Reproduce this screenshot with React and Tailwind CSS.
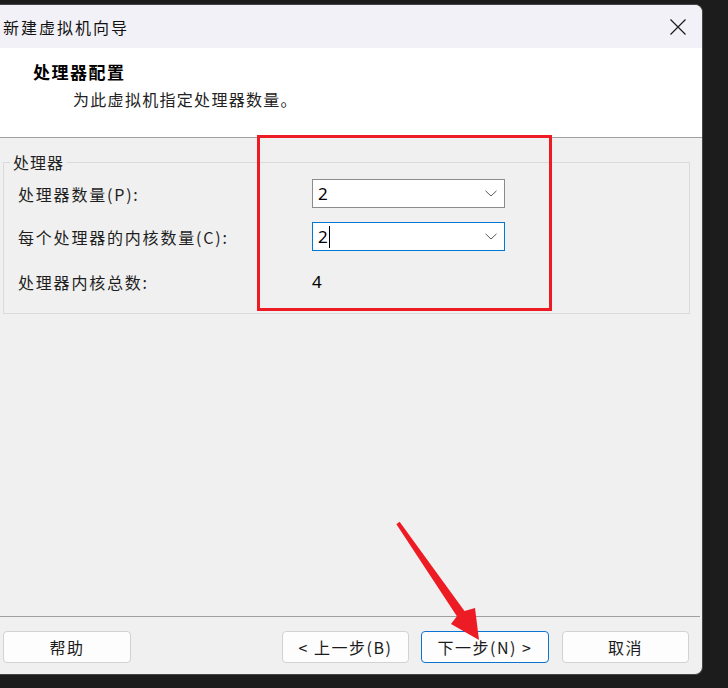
const cjk = { fontFamily: "'Noto Sans CJK SC', 'Noto Sans', sans-serif" };

function Chevron() {
  return (
    <svg width="12" height="7" viewBox="0 0 12 7" className="shrink-0">
      <path d="M0.5 0.8 L6 6 L11.5 0.8" fill="none" stroke="#5a5a5a" strokeWidth="1" />
    </svg>
  );
}

function CloseIcon() {
  return (
    <svg width="16" height="16" viewBox="0 0 16 16">
      <path d="M0.5 0.5 L15.5 15.5 M15.5 0.5 L0.5 15.5" stroke="#1a1a1a" strokeWidth="1.2" fill="none" />
    </svg>
  );
}

function Combo({ value, focused }) {
  return (
    <div
      className={`flex h-[29px] w-[193px] items-center justify-between bg-white pl-[5px] pr-[7px] border ${
        focused ? 'border-[#0078d4]' : 'border-[#8c8c8c]'
      }`}
    >
      <div className="flex items-center text-[17px] text-black" style={{ fontFamily: "'Noto Sans', sans-serif" }}>
        {value}
        {focused && <span className="ml-[1px] inline-block h-[22px] w-[1px] bg-black" />}
      </div>
      <Chevron />
    </div>
  );
}

function Btn({ children, primary, wide }) {
  return (
    <button
      className={`flex h-[32px] items-center justify-center rounded-[4px] bg-[#fdfdfd] text-[16px] tracking-[1.5px] text-[#1b1b1b] border ${
        wide ? 'w-[128px]' : 'w-[127px]'
      } ${primary ? 'border-[#0a74d0]' : 'border-[#d2d2d2]'}`}
    >
      {children}
    </button>
  );
}

export default function App() {
  return (
    <div className="relative h-[688px] w-[728px] overflow-hidden bg-[#1c1c1c] pt-[4px]" style={cjk}>
      <div className="flex h-[671px] w-[703px] flex-col overflow-hidden rounded-r-[8px] border-r border-b border-t border-[#454545] bg-[#f0f0f0]">
        {/* title bar */}
        <div className="flex h-[43px] shrink-0 items-center justify-between bg-[#f3f1f8] pl-[3px] pr-[16px]">
          <span className="text-[16px] tracking-[2px] text-[#111]">新建虚拟机向导</span>
          <CloseIcon />
        </div>

        {/* header */}
        <div className="h-[90px] shrink-0 border-b border-[#a0a0a0] bg-white pt-[12px]">
          <div className="pl-[33px] text-[17px] font-bold leading-[24px] tracking-[1.5px] text-black">处理器配置</div>
          <div className="mt-[3px] pl-[73px] text-[16px] leading-[24px] tracking-[1.3px] text-[#222]">
            为此虚拟机指定处理器数量。
          </div>
        </div>

        {/* body */}
        <div className="flex-1 pt-[24px]">
          <div className="relative ml-[3px] h-[152px] w-[687px] border border-[#dadada] pt-[16px] pl-[14px]">
            <span className="absolute left-[6px] top-[-12px] bg-[#f0f0f0] px-[3px] text-[16px] leading-[22px] tracking-[1px] text-[#222]">
              处理器
            </span>
            <div className="flex h-[29px] items-center">
              <span className="w-[294px] text-[16px] tracking-[1.8px] text-[#1e1e1e]">处理器数量(P):</span>
              <Combo value="2" />
            </div>
            <div className="mt-[14px] flex h-[29px] items-center">
              <span className="w-[294px] text-[16px] tracking-[1.8px] text-[#1e1e1e]">每个处理器的内核数量(C):</span>
              <Combo value="2" focused />
            </div>
            <div className="mt-[16px] flex h-[29px] items-center">
              <span className="w-[294px] text-[16px] tracking-[1.8px] text-[#1e1e1e]">处理器内核总数:</span>
              <span className="text-[17px] text-black" style={{ fontFamily: "'Noto Sans', sans-serif" }}>4</span>
            </div>
          </div>
        </div>

        {/* footer */}
        <div className="mr-[2px] flex h-[58px] shrink-0 border-t border-[#a0a0a0] pt-[14px] pl-[3px]">
          <Btn wide>帮助</Btn>
          <div className="ml-[151px] flex gap-[12px]">
            <Btn>&lt; 上一步(B)</Btn>
            <Btn primary wide>下一步(N) &gt;</Btn>
          </div>
          <div className="ml-[13px]">
            <Btn>取消</Btn>
          </div>
        </div>
      </div>

      {/* annotation: red box */}
      <div className="absolute left-[257px] top-[135px] h-[176px] w-[295px] border-[3px] border-[#ed1c24]" />

      {/* annotation: red arrow */}
      <svg className="absolute left-0 top-0" width="728" height="688" viewBox="0 0 728 688">
        <polygon
          points="399.6,521.8 464.5,611 475,608 479,640 451,624 456.9,616.2 396.4,524.2"
          fill="#ed1c24"
        />
      </svg>
    </div>
  );
}
